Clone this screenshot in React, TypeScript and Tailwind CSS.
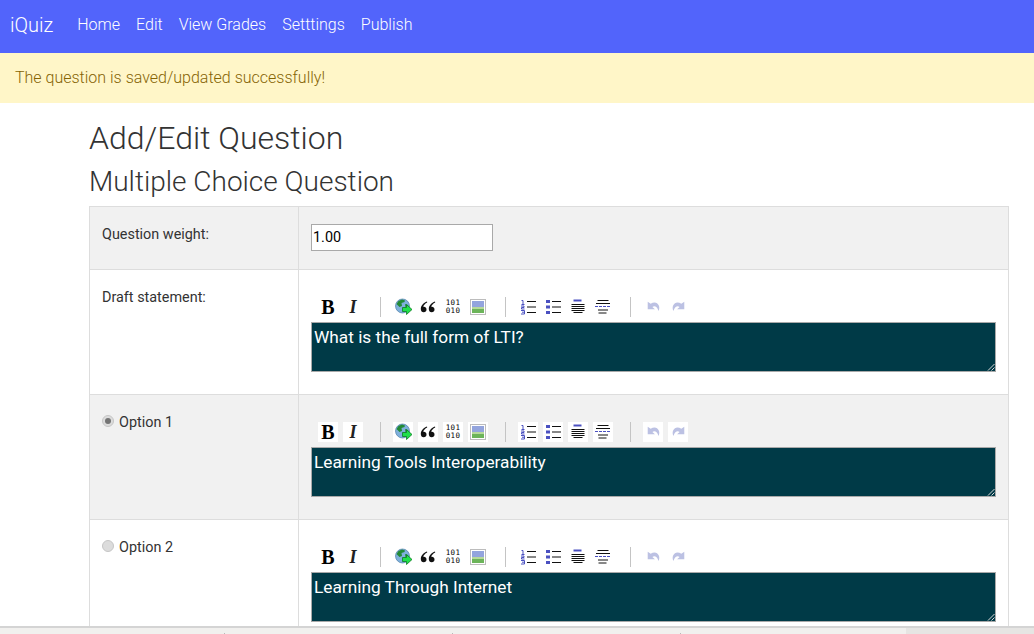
import { ReactNode } from "react"

const navLinks = ["Home", "Edit", "View Grades", "Setttings", "Publish"]

function ToolButton({ children }: { children: ReactNode }) {
  return <span className="flex h-5 w-5 items-center justify-center overflow-hidden bg-white">{children}</span>
}

function Separator() {
  return <span className="mr-3 ml-[17px] h-5 w-px bg-[#c4c4c4]" />
}

function ListIcon({ kind }: { kind: "ol" | "ul" }) {
  return (
    <svg width="16" height="16" viewBox="0 0 16 16">
      {kind === "ol" ? (
        <g fill="none" stroke="#4a50c0" strokeWidth="1">
          <path d="M1.500 1.500h1.500v3.500M1.500 5.500h3" />
          <path d="M1 7h3v1.500H1.500V10h3" />
          <path d="M1 11.500h3.500v3.500H1M2 13.200h2" />
        </g>
      ) : (
        <g fill="#4a50c0">
          <rect x="1" y="1" width="4" height="3" />
          <rect x="1" y="6.500" width="4" height="3" />
          <rect x="1" y="12" width="4" height="3" />
        </g>
      )}
      <path d="M7 2.500h9M7 8h9M7 13.500h9" stroke="#111" strokeWidth="1" />
    </svg>
  )
}

function Toolbar() {
  return (
    <div className="flex h-5 items-center pl-[7px]">
      <div className="flex gap-[5px]">
        <ToolButton>
          <span className="font-['Liberation_Serif',serif] text-[20px] leading-none font-bold text-black">B</span>
        </ToolButton>
        <ToolButton>
          <span className="font-['Liberation_Serif',serif] text-[18px] leading-none font-bold text-[#222] italic">I</span>
        </ToolButton>
      </div>
      <Separator />
      <div className="flex gap-[5px]">
        <ToolButton>
          <svg width="18" height="18" viewBox="0 0 18 18" className="translate-x-px">
            <circle cx="7.500" cy="8" r="7" fill="#7fb0dc" stroke="#4f7fa8" strokeWidth="0.7" />
            <path d="M3.500 3 7 1.500l3 1-.5 1.500-3 1 .5 3-2.500 1-3-3zM10 6l3 1 .5 2-3 .5z" fill="#238a35" />
            <path d="M7.500 9.500h4V6.500l5.500 5-5.500 5v-3h-4z" fill="#1fe04a" stroke="#0c7a22" strokeWidth="0.8" />
          </svg>
        </ToolButton>
        <ToolButton>
          <svg width="16" height="16" viewBox="0 0 16 16" fill="#111">
            <path d="M7 2.500C3.500 4 .8 6.500.8 10c0 2 1.200 3.300 2.900 3.300S6.500 12.200 6.500 10.500 5.300 7.800 3.900 7.800c-.3 0-.5 0-.7.1.3-1.700 2-3.300 4-4.300z" />
            <path d="M15 2.500c-3.500 1.500-6.200 4-6.200 7.500 0 2 1.200 3.300 2.900 3.300s2.800-1.100 2.800-2.800-1.200-2.700-2.600-2.700c-.3 0-.5 0-.7.1.3-1.700 2-3.300 4-4.300z" />
          </svg>
        </ToolButton>
        <ToolButton>
          <span className="font-['DejaVu_Sans_Mono',monospace] text-[7.5px] leading-[8px] tracking-[0.4px] text-black">
            101
            <br />
            010
          </span>
        </ToolButton>
        <ToolButton>
          <span className="flex h-4 w-4 flex-col border border-[#bcbcbc] bg-white p-px">
            <span className="h-[6px] bg-[#93a4dd]" />
            <span className="h-[2px] bg-[#b6d99a]" />
            <span className="h-[4px] bg-[#6cb45a]" />
          </span>
        </ToolButton>
      </div>
      <Separator />
      <div className="flex gap-[5px]">
        <ToolButton>
          <ListIcon kind="ol" />
        </ToolButton>
        <ToolButton>
          <ListIcon kind="ul" />
        </ToolButton>
        <ToolButton>
          <svg width="16" height="16" viewBox="0 0 16 16">
            <path d="M3.500 1.500h8" stroke="#4a50c0" strokeWidth="2" />
            <path d="M1.500 5.500h13M1.500 7.500h13M1.500 9.500h13M1.500 11.500h13M3.500 13.500h9" stroke="#111" strokeWidth="1" />
          </svg>
        </ToolButton>
        <ToolButton>
          <svg width="16" height="16" viewBox="0 0 16 16">
            <path d="M2.500 1.500h11M1 4.500h14M3 11h10M3.500 14h8" stroke="#111" strokeWidth="1" />
            <path d="M0 7.500h16" stroke="#4a50c0" strokeWidth="1" strokeDasharray="3 1" />
          </svg>
        </ToolButton>
      </div>
      <Separator />
      <div className="flex gap-[5px]">
        <ToolButton>
          <svg width="16" height="16" viewBox="0 0 14 14" fill="#bcc1e3" className="translate-x-px">
            <path d="M1.500 2.500V9h6.300L5.600 7c1.700-1.200 4-.7 5.400 3.500 1.800-3.500-.3-7.500-3.500-7.500-1.200 0-2.300.4-3.400 1.200z" />
          </svg>
        </ToolButton>
        <ToolButton>
          <svg width="16" height="16" viewBox="0 0 14 14" fill="#bcc1e3">
            <path d="M12.500 2.500V9H6.200l2.200-2C6.700 5.800 4.400 6.300 3 10.500 1.200 7 3.300 3 6.500 3c1.200 0 2.300.4 3.400 1.200z" />
          </svg>
        </ToolButton>
      </div>
    </div>
  )
}

function Editor({ value }: { value: string }) {
  return (
    <div className="pt-[27px] pr-[12px] pl-3">
      <Toolbar />
      <div className="relative mt-[5px] h-[50px] border border-[#a9a9a9] bg-[#003a47] px-[2px] text-[17.28px] leading-[28px] text-white">
        {value}
        <svg className="absolute right-0 bottom-0" width="9" height="9" viewBox="0 0 9 9">
          <path d="M8.500 2 2 8.500M8.500 5.500 5.500 8.500" stroke="#d8d8d8" strokeWidth="1" />
        </svg>
      </div>
    </div>
  )
}

function Radio({ checked }: { checked?: boolean }) {
  return (
    <span className="flex h-3 w-3 -translate-y-[2px] items-center justify-center rounded-full border border-[#c6c6c6] bg-[#dcdcdc]">
      {checked && <span className="h-[6px] w-[6px] rounded-full bg-[#747474]" />}
    </span>
  )
}

function OptionLabel({ text, checked }: { text: string; checked?: boolean }) {
  return (
    <span className="flex items-center gap-[5px]">
      <Radio checked={checked} /> {text}
    </span>
  )
}

function Row({ label, shaded, children, height }: { label: ReactNode; shaded?: boolean; children: ReactNode; height: string }) {
  return (
    <div className={`flex border-b border-[#dddddd] ${height} ${shaded ? "bg-[#f1f1f1]" : "bg-white"}`}>
      <div className="w-[209px] shrink-0 border-r border-[#dddddd] px-3 pt-[18px] text-[14.4px] leading-[20px] text-[#333]">{label}</div>
      <div className="min-w-0 flex-1">{children}</div>
    </div>
  )
}

export default function App() {
  return (
    <div className="relative h-screen overflow-hidden bg-white font-['Roboto',sans-serif]">
      <nav className="flex h-[53px] items-center bg-[#5264fb] pb-1 pl-[10px] font-light text-white">
        <span className="text-[20px]">iQuiz</span>
        <ul className="ml-[24px] flex gap-[16px] text-[16px]">
          {navLinks.map((link) => (
            <li key={link}>{link}</li>
          ))}
        </ul>
      </nav>
      <div className="flex h-[50px] items-center bg-[#fff6c8] pl-[15px] text-[16px] font-light text-[#856404]">
        The question is saved/updated successfully!
      </div>
      <main className="pr-[25px] pl-[89px]">
        <h1 className="pt-[16px] text-[32px] leading-[38px] font-light text-[#333]">Add/Edit Question</h1>
        <h2 className="mt-[7px] text-[28px] leading-[36px] font-light text-[#333]">Multiple Choice Question</h2>
        <div className="mt-[6px] border-x border-t border-[#dddddd]">
          <Row label="Question weight:" shaded height="h-[63px]">
            <div className="pt-[17px] pl-3">
              <input
                readOnly
                value="1.00"
                className="h-[27px] w-[182px] border border-[#a9a9a9] bg-white px-px text-[14.4px] text-black"
              />
            </div>
          </Row>
          <Row label="Draft statement:" height="h-[125px]">
            <Editor value="What is the full form of LTI?" />
          </Row>
          <Row label={<OptionLabel text="Option 1" checked />} shaded height="h-[125px]">
            <Editor value="Learning Tools Interoperability" />
          </Row>
          <Row label={<OptionLabel text="Option 2" />} height="h-[125px]">
            <Editor value="Learning Through Internet" />
          </Row>
        </div>
      </main>
      <div className="absolute inset-x-0 bottom-0 flex h-[8px] border-t-2 border-[#d4d4d4] bg-[#f1f0ee]">
        <span className="flex w-[906px] gap-[227px] self-end pl-[224px]">
          <span className="h-px w-px bg-[#b8b8b8]" />
          <span className="h-px w-px bg-[#b8b8b8]" />
          <span className="h-px w-px bg-[#b8b8b8]" />
        </span>
        <span className="flex-1 bg-[#e6e5e3]" />
      </div>
    </div>
  )
}
